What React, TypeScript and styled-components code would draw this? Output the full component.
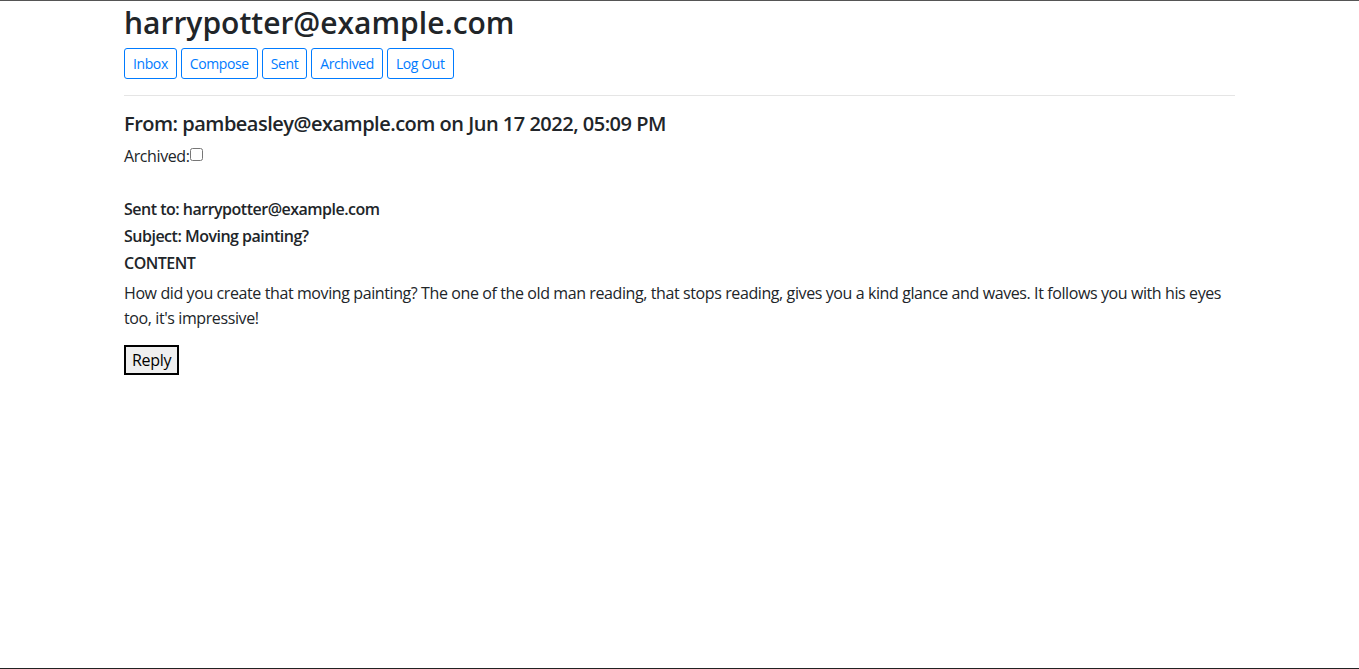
import styled, { createGlobalStyle } from 'styled-components'

const GlobalStyle = createGlobalStyle`
  *, *::before, *::after {
    box-sizing: border-box;
  }
  html {
    height: 100%;
    border-top: 1px solid #555;
    border-bottom: 1px solid #222;
  }
  body {
    margin: 0;
    font-family: "Open Sans", "Noto Sans", sans-serif;
    font-size: 16px;
    line-height: 1.5;
    letter-spacing: -0.3px;
    color: #212529;
    background: #fff;
  }
`

const Container = styled.div`
  max-width: 1141px;
  margin: 0 auto;
  padding: 5px 15px 0;
`

const Title = styled.h3`
  font-size: 30px;
  font-weight: 600;
  line-height: 33.6px;
  letter-spacing: 0;
  margin: 0 0 8px;
`

const Nav = styled.div`
  display: flex;
  gap: 4px;
`

const NavButton = styled.button`
  font-family: inherit;
  font-size: 14px;
  line-height: 1.5;
  letter-spacing: -0.4px;
  padding: 4px 8px;
  color: #007bff;
  background: transparent;
  border: 1px solid #007bff;
  border-radius: 3px;
  cursor: pointer;

  &:hover {
    color: #fff;
    background: #007bff;
  }
`

const Rule = styled.hr`
  margin: 16px 0;
  border: 0;
  border-top: 1px solid rgba(0, 0, 0, 0.1);
`

const FromLine = styled.h5`
  font-size: 20px;
  font-weight: 600;
  line-height: 1.2;
  letter-spacing: -0.5px;
  margin: 0 0 8px;
`

const ArchiveLabel = styled.label`
  display: flex;
  align-items: center;
  letter-spacing: -0.4px;
  margin-bottom: 32px;

  input {
    margin: 0;
    width: 13px;
    height: 13px;
    position: relative;
    top: -1px;
  }
`

const Field = styled.h6`
  font-size: 16px;
  font-weight: 600;
  line-height: 1.2;
  letter-spacing: -0.5px;
  margin: 0 0 8px;
`

const Body = styled.p`
  line-height: 25px;
  letter-spacing: -0.4px;
  margin: 0 0 14px;
`

const ReplyButton = styled.button`
  font-family: inherit;
  font-size: 16px;
  line-height: 1.5;
  letter-spacing: -0.3px;
  padding: 1px 6px;
  color: #000;
  background: #efefef;
  border: 2px solid #000;
  border-radius: 0;
`

export default function App() {
  return (
    <>
      <GlobalStyle />
      <Container>
        <Title>harrypotter@example.com</Title>
        <Nav>
          <NavButton>Inbox</NavButton>
          <NavButton>Compose</NavButton>
          <NavButton>Sent</NavButton>
          <NavButton>Archived</NavButton>
          <NavButton>Log Out</NavButton>
        </Nav>
        <Rule />
        <FromLine>From: pambeasley@example.com on Jun 17 2022, 05:09 PM</FromLine>
        <ArchiveLabel>
          Archived:<input type="checkbox" />
        </ArchiveLabel>
        <Field>Sent to: harrypotter@example.com</Field>
        <Field>Subject: Moving painting?</Field>
        <Field>CONTENT</Field>
        <Body>
          How did you create that moving painting? The one of the old man reading, that stops reading,
          gives you a kind glance and waves. It follows you with his eyes too, it's impressive!
        </Body>
        <ReplyButton>Reply</ReplyButton>
      </Container>
    </>
  )
}
